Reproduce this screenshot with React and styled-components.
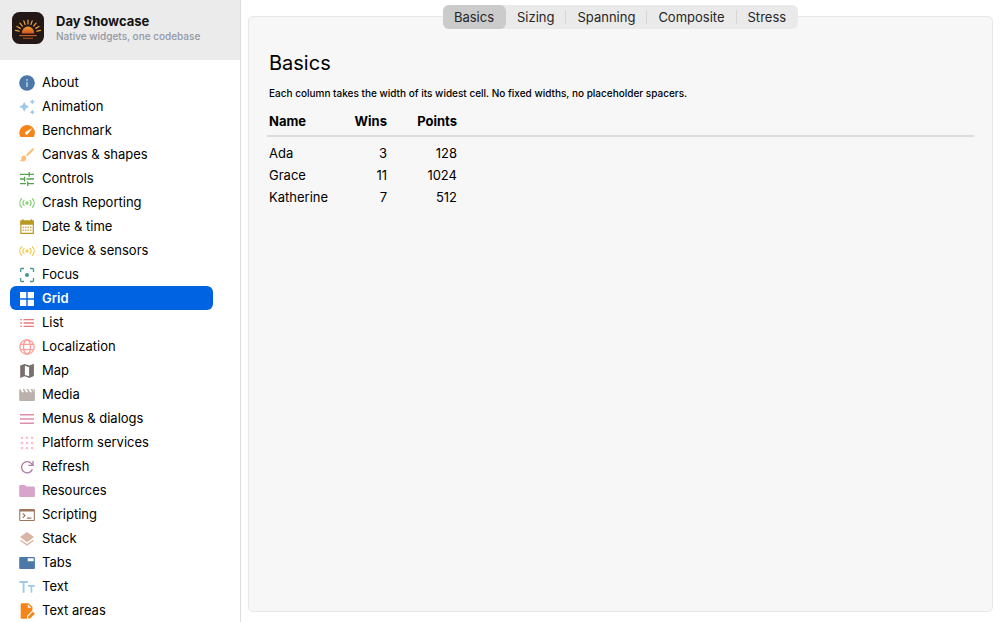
import React, { useState } from "react";
import styled, { createGlobalStyle } from "styled-components";

const GlobalStyle = createGlobalStyle`
  * { box-sizing: border-box; }
  body {
    margin: 0;
    background: #ffffff;
    color: #141414;
    font-family: Inter, "Liberation Sans", sans-serif;
    font-size: 13px;
    -webkit-font-smoothing: antialiased;
  }
`;

const Window = styled.div`
  display: flex;
  height: 100vh;
  overflow: hidden;
`;

const Sidebar = styled.aside`
  display: flex;
  flex-direction: column;
  flex: 0 0 241px;
  border-right: 1px solid #dedede;
`;

const Brand = styled.header`
  display: flex;
  align-items: flex-start;
  gap: 12px;
  padding: 12px;
  height: 60px;
  flex: none;
  background: #ebebeb;
`;

const Logo = styled.svg`
  width: 32px;
  height: 32px;
`;

const BrandName = styled.h1`
  margin: 0;
  font-size: 13px;
  line-height: 18px;
  font-weight: 700;
`;

const BrandTagline = styled.p`
  margin: 0;
  font-size: 10px;
  line-height: 12px;
  font-weight: 500;
  color: #9398a4;
`;

const Nav = styled.nav`
  flex: 1;
  min-height: 0;
  overflow: hidden;
  padding: 10px 27px 0 10px;
`;

const NavList = styled.ul`
  margin: 0;
  padding: 0;
  list-style: none;
`;

const NavLink = styled.a`
  display: flex;
  align-items: center;
  gap: 6px;
  height: 24px;
  padding: 0 8px;
  border-radius: 6px;
  line-height: 24px;
  text-decoration: none;
  white-space: nowrap;
  font-weight: ${(p) => (p.$active ? 600 : 400)};
  color: ${(p) => (p.$active ? "#ffffff" : "#000000")};
  background: ${(p) => (p.$active ? "#0063e1" : "transparent")};
`;

const Glyph = styled.svg`
  flex: none;
  width: 18px;
  height: 18px;
  margin-top: 2px;
  color: ${(p) => p.$tint};
  fill: currentColor;
`;

const Main = styled.main`
  display: flex;
  flex-direction: column;
  flex: 1;
  min-width: 0;
  padding: 16px 7px 10px;
`;

const Panel = styled.section`
  flex: 1;
  padding: 0 18px;
  border: 1px solid #e7e7e7;
  border-radius: 5px;
  background: #f7f7f7;
`;

const TabBar = styled.div`
  display: flex;
  width: max-content;
  margin: -12px auto 0;
  border-radius: 6px;
  background: #eaeaea;
`;

const Tab = styled.button`
  position: relative;
  height: 24px;
  padding: 0 12px 0 11px;
  border: 0;
  border-radius: 6px;
  font: inherit;
  line-height: 24px;
  color: #262626;
  background: ${(p) => (p.$active ? "#cbcbcb" : "transparent")};

  &:not(:first-child):not(:last-child)::after {
    content: "";
    position: absolute;
    top: 5px;
    right: 0;
    width: 1px;
    height: 14px;
    background: #d6d6d6;
  }
`;

const Title = styled.h2`
  margin: 18px 0 0;
  padding-left: 2px;
  font-size: 20px;
  line-height: 32px;
  font-weight: 400;
  color: #000000;
`;

const Note = styled.p`
  margin: 6px 0 8px;
  padding-left: 2px;
  font-size: 10px;
  line-height: 16px;
  font-weight: 500;
  color: #000000;
`;

const Table = styled.table`
  width: 100%;
  table-layout: fixed;
  border-collapse: collapse;
  color: #000000;

  thead tr { border-bottom: 2px solid #dddddd; }
  tbody tr:first-child td { padding-top: 5px; }
`;

const Col = styled.col`
  width: ${(p) => p.$width};
`;

const HeadCell = styled.th`
  padding: 0 0 2px ${(p) => (p.$numeric ? "0" : "2px")};
  line-height: 24px;
  font-weight: 700;
  text-align: ${(p) => (p.$numeric ? "right" : "left")};
`;

const Cell = styled.td`
  padding: 0 0 0 ${(p) => (p.$numeric ? "0" : "2px")};
  line-height: 22px;
  font-weight: 400;
  text-align: ${(p) => (p.$numeric ? "right" : "left")};
`;

const line = { fill: "none", stroke: "currentColor" };

const waves = (
  <>
    <circle cx="9" cy="9" r="1.7" />
    <g {...line} strokeWidth="1.3" strokeLinecap="round">
      <path d="M6.1 6.4C4.7 7.9 4.7 10.1 6.1 11.6M11.9 6.4c1.4 1.5 1.4 3.7 0 5.2" />
      <path d="M3.6 4.7C1.2 7.2 1.2 10.8 3.6 13.3M14.4 4.7c2.4 2.5 2.4 6.1 0 8.6" />
    </g>
  </>
);

const sections = [
  ["About", "#4c78a8", <>
    <circle cx="9" cy="9" r="7.8" />
    <g fill="#c5d3e3"><circle cx="9" cy="5.9" r=".9" /><path d="M8.3 7.9h1.4v5H8.3z" /></g>
  </>],
  ["Animation", "#9ecae9", <>
    <path d="M6.2 3.7 7.8 7.1 11.2 8.8 7.8 10.4 6.2 13.9 4.6 10.4 1.2 8.8 4.6 7.1z" />
    <path d="M14.3 1 15.2 2.9 17.1 3.8 15.2 4.7 14.3 6.6 13.4 4.7 11.5 3.8 13.4 2.9zM14.3 11.4 15.2 13.3 17.1 14.2 15.2 15.1 14.3 17 13.4 15.1 11.5 14.2 13.4 13.3z" />
  </>],
  ["Benchmark", "#f58518", <>
    <path d="M9.1 3a7.8 7.8 0 0 1 7.8 7.8c0 1.3-.3 2.4-.8 3.4-.3.6-.7.9-1.4.9H3.5c-.7 0-1.1-.3-1.4-.9a7.8 7.8 0 0 1 7-11.2z" />
    <path fill="#fff" d="M14.4 6.1 9.9 12.1a1.6 1.6 0 0 1-2.4-2.2z" />
  </>],
  ["Canvas & shapes", "#ffbf79", <>
    <path {...line} strokeWidth="2.1" strokeLinecap="round" d="M15 3.2 9.2 9" />
    <path d="M5.7 9.5c1.5 0 2.6 1.1 2.6 2.5 0 2-1.6 3.6-3.9 3.6-1.1 0-2-.4-2.6-1.1.9 0 1.5-.7 1.5-2.2 0-1.6 1-2.8 2.4-2.8z" />
  </>],
  ["Controls", "#54a24b", <g {...line} strokeWidth="1.3">
    <path d="M2 4.3h8.5M11.2 2v4.8M11.2 4.3H16M2 9h4M6.6 6.8v4.6M8.5 9H16M2 13.7h6M9.7 11.4v4.6M9.7 13.7H16" />
  </g>],
  ["Crash Reporting", "#88d27a", waves],
  ["Date & time", "#b79a20", <>
    <path {...line} strokeWidth="1.2" d="M2.9 4h12.4v11.4H2.9z" />
    <path d="M2.3 2.3h13.6v4.4H2.3zM4.2 1.2h1.4v2H4.2zM12.6 1.2H14v2h-1.4z" />
    <path d="M4.6 8.6h1.6v1.6H4.6zM7 8.6h1.6v1.6H7zM9.5 8.6h1.6v1.6H9.5zM12 8.6h1.6v1.6H12zM4.6 11.4h1.6V13H4.6zM7 11.4h1.6V13H7zM9.5 11.4h1.6V13H9.5zM12 11.4h1.6V13H12z" opacity=".7" />
  </>],
  ["Device & sensors", "#f2cf5b", waves],
  ["Focus", "#439894", <>
    <circle cx="9" cy="9" r="2" />
    <path {...line} strokeWidth="1.3" d="M2.6 6V3.4q0-.9.9-.9H6M12 2.5h2.6q.9 0 .9.9V6M15.5 12v2.6q0 .9-.9.9H12M6 15.5H3.5q-.9 0-.9-.9V12" />
  </>],
  ["Grid", "#ffffff", <path d="M2 2h6.3v6.3H2zM9.7 2H16v6.3H9.7zM2 9.7h6.3V16H2zM9.7 9.7H16V16H9.7z" />],
  ["List", "#e45756", <path opacity=".8" d="M5.6 4.9H16v1.4H5.6zM5.6 8.3H16v1.4H5.6zM5.6 11.7H16v1.4H5.6zM2.2 4.9h1.6v1.4H2.2zM2.2 8.3h1.6v1.4H2.2zM2.2 11.7h1.6v1.4H2.2z" />],
  ["Localization", "#ff9d98", <g {...line} strokeWidth="1.3">
    <circle cx="9" cy="9" r="7.2" />
    <ellipse cx="9" cy="9" rx="3.5" ry="7.2" />
    <path d="M2.3 6.4h13.4M2.3 11.6h13.4" />
  </g>],
  ["Map", "#79706e", <path fillRule="evenodd" d="M2.2 3.4 6.6 2l4.8 1.5L15.3 2q.6-.1.6.5v11.6L11.4 15.9 6.6 14.3 2.8 15.8q-.6.1-.6-.5zM6.9 3.8v9.1l4.2 1.4V5.2z" />],
  ["Media", "#bab0ac", <path d="M2.2 3 4 6.3h2.2L4.5 3h1.8L8 6.3h2.2L8.5 3h1.8L12 6.3h2.2L12.5 3h1.8L16 6.3 15.4 3h.4q1.1 0 1.1 1.1v9.8q0 1.1-1.1 1.1H2.3q-1.1 0-1.1-1.1V4q0-.8 1-1z" />],
  ["Menus & dialogs", "#d67195", <path opacity=".8" d="M2 4h14v1.5H2zM2 8.3h14v1.5H2zM2 12.6h14v1.5H2z" />],
  ["Platform services", "#fcbfd2", <path d="M2.8 2.8h2.3v2.3H2.8zM7.9 2.8h2.3v2.3H7.9zM13 2.8h2.3v2.3H13zM2.8 7.9h2.3v2.3H2.8zM7.9 7.9h2.3v2.3H7.9zM13 7.9h2.3v2.3H13zM2.8 13h2.3v2.3H2.8zM7.9 13h2.3v2.3H7.9zM13 13h2.3v2.3H13z" />],
  ["Refresh", "#b279a2", <>
    <path {...line} strokeWidth="1.3" d="M14.4 11.2A5.6 5.6 0 1 1 13.5 5.7L15 7.3" />
    <path {...line} strokeWidth="1.3" d="M15 3v4.4h-4.6" />
  </>],
  ["Resources", "#d6a5c9", <path d="M2.3 3h4.6l1.5 1.5h7.4q1.1 0 1.1 1.1v8.3q0 1.1-1.1 1.1H2.3q-1.1 0-1.1-1.1V4.1Q1.2 3 2.3 3z" />],
  ["Scripting", "#9e765f", <>
    <path fillRule="evenodd" d="M2.3 3h13.5q1.1 0 1.1 1.1v9.8q0 1.1-1.1 1.1H2.3q-1.1 0-1.1-1.1V4.1Q1.2 3 2.3 3zM2.3 5.6v8.3h13.5V5.6z" />
    <path {...line} strokeWidth="1.2" d="M4.8 7.4 7 9.6 4.8 11.8M9 12.2h4.4" />
  </>],
  ["Stack", "#d8b5a5", <>
    <path d="M9 2 16 7.1 9 12.3 2 7.1z" />
    <path {...line} strokeWidth="1.3" d="M2.4 10.2 9 14.9 15.6 10.2" />
  </>],
  ["Tabs", "#4c78a8", <path fillRule="evenodd" d="M2.3 3h13.5q1.1 0 1.1 1.1v9.8q0 1.1-1.1 1.1H2.3q-1.1 0-1.1-1.1V4.1Q1.2 3 2.3 3zM9.7 4.2v3h6v-3z" />],
  ["Text", "#9ecae9", <path d="M1.4 3.1h8.4v1.8H6.5v9.9H4.7V4.9H1.4zM10 7h6.8v1.7h-2.5v6.1h-1.7V8.7H10z" />],
  ["Text areas", "#f58518", <>
    <path fillRule="evenodd" d="M3.8 1.2h6.8L14.4 5v3.5L9 13.9v2.9H3.8q-1.1 0-1.1-1.1V2.3q0-1.1 1.1-1.1zM9.8 2.3v3.5h3.5z" />
    <path d="m10.1 14.5 4.8-4.8 2 2-4.8 4.8h-2z" />
  </>],
];

const rays = [-78, -59, -39, -19, 0, 19, 39, 59, 78];

function SunriseLogo() {
  return (
    <Logo viewBox="0 0 32 32" aria-hidden="true">
      <defs>
        <linearGradient id="sun" x1="0" y1="0" x2="0" y2="1">
          <stop offset="0" stopColor="#f29a30" />
          <stop offset="1" stopColor="#cf5420" />
        </linearGradient>
      </defs>
      <rect width="32" height="32" rx="7.5" fill="#231815" />
      <path d="M9.8 21.4a6.2 6.8 0 0 1 12.4 0z" fill="url(#sun)" />
      <g stroke="#e9a23b" strokeWidth="1.2" strokeLinecap="round">
        {rays.map((a) => (
          <path key={a} d="M16 12V8.2" transform={`rotate(${a} 16 21)`} />
        ))}
      </g>
      <path d="M7.2 23.6h17.6" stroke="#c9602a" strokeWidth="1.1" />
      <path d="M11 26.3h10" stroke="#a84a22" strokeWidth="1.1" />
    </Logo>
  );
}

const tabs = ["Basics", "Sizing", "Spanning", "Composite", "Stress"];

const scores = [
  ["Ada", 3, 128],
  ["Grace", 11, 1024],
  ["Katherine", 7, 512],
];

export default function App() {
  const [section, setSection] = useState("Grid");
  const [tab, setTab] = useState("Basics");

  return (
    <>
      <GlobalStyle />
      <Window>
        <Sidebar>
          <Brand>
            <SunriseLogo />
            <div>
              <BrandName>Day Showcase</BrandName>
              <BrandTagline>Native widgets, one codebase</BrandTagline>
            </div>
          </Brand>
          <Nav aria-label="Sections">
            <NavList>
              {sections.map(([name, tint, art]) => (
                <li key={name}>
                  <NavLink
                    href="#"
                    $active={name === section}
                    aria-current={name === section ? "page" : undefined}
                    onClick={() => setSection(name)}
                  >
                    <Glyph viewBox="0 0 18 18" $tint={name === "Grid" && section !== "Grid" ? "#83bcb6" : tint} aria-hidden="true">
                      {art}
                    </Glyph>
                    {name}
                  </NavLink>
                </li>
              ))}
            </NavList>
          </Nav>
        </Sidebar>
        <Main>
          <Panel>
            <TabBar role="tablist">
              {tabs.map((name) => (
                <Tab
                  key={name}
                  type="button"
                  role="tab"
                  aria-selected={name === tab}
                  $active={name === tab}
                  onClick={() => setTab(name)}
                >
                  {name}
                </Tab>
              ))}
            </TabBar>
            <Title>Basics</Title>
            <Note>Each column takes the width of its widest cell. No fixed widths, no placeholder spacers.</Note>
            <Table>
              <colgroup>
                <Col $width="60px" />
                <Col $width="60px" />
                <Col $width="70px" />
                <Col />
              </colgroup>
              <thead>
                <tr>
                  <HeadCell scope="col">Name</HeadCell>
                  <HeadCell scope="col" $numeric>Wins</HeadCell>
                  <HeadCell scope="col" $numeric>Points</HeadCell>
                </tr>
              </thead>
              <tbody>
                {scores.map(([name, wins, points]) => (
                  <tr key={name}>
                    <Cell>{name}</Cell>
                    <Cell $numeric>{wins}</Cell>
                    <Cell $numeric>{points}</Cell>
                  </tr>
                ))}
              </tbody>
            </Table>
          </Panel>
        </Main>
      </Window>
    </>
  );
}
